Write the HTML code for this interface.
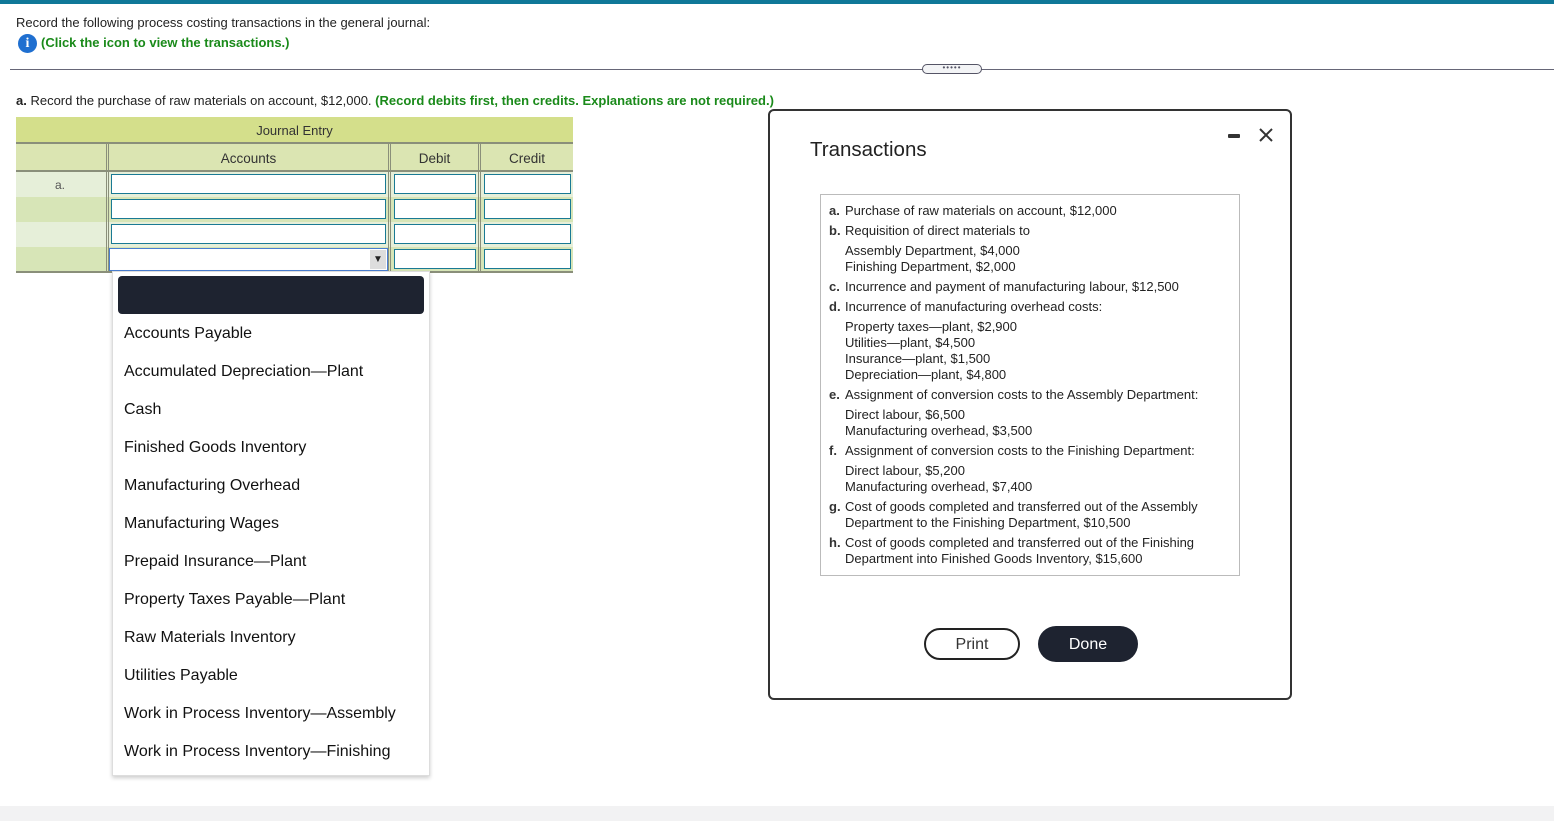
<!DOCTYPE html>
<html><head><meta charset="utf-8"><style>
*{margin:0;padding:0;box-sizing:border-box}
body{width:1554px;height:821px;position:relative;background:#fff;font-family:"Liberation Sans",Arial,sans-serif;color:#222;overflow:hidden}
.a{position:absolute;white-space:nowrap}
.inp{position:absolute;height:20px;border:1px solid #1a7a94;background:#fff}
.t{position:absolute;font-size:13px;line-height:16px;white-space:nowrap;color:#222}
.t b{position:absolute;left:-16px;font-weight:bold;color:#333}
.dd{font-size:16px;color:#111;left:124px}
</style></head><body>
<div class="a" style="left:0;top:0;width:1554px;height:4px;background:#0f7898"></div>
<div class="a" style="left:16px;top:15px;font-size:13px">Record the following process costing transactions in the general journal:</div>
<div class="a" style="left:18px;top:34px;width:19px;height:19px;border-radius:50%;background:#1f6fd0;color:#fff;font-weight:bold;font-size:14px;text-align:center;line-height:19px;font-family:'Liberation Serif',serif">i</div>
<div class="a" style="left:41px;top:35px;font-size:13px;color:#1a8a1a;font-weight:bold">(Click the icon to view the transactions.)</div>
<div class="a" style="left:10px;top:69px;width:1544px;height:1px;background:#667"></div>
<div class="a" style="left:922px;top:64px;width:60px;height:10px;border:1px solid #556;border-radius:5px;background:#f3f4f6;font-size:8px;line-height:5px;text-align:center;color:#556;letter-spacing:1px">•••••</div>
<div class="a" style="left:16px;top:93px;font-size:13px"><b>a.</b> Record the purchase of raw materials on account, $12,000. <span style="color:#1a8a1a;font-weight:bold">(Record debits first, then credits. Explanations are not required.)</span></div>
<div class="a" style="left:16px;top:117px;width:557px;height:26px;background:#d4df8b;font-size:13px;text-align:center;line-height:28px;color:#333">Journal Entry</div>
<div class="a" style="left:16px;top:142px;width:557px;height:2px;background:#8a8f7a"></div>
<div class="a" style="left:16px;top:144px;width:557px;height:26px;background:#dbe5b2"></div>
<div class="a" style="left:16px;top:170px;width:557px;height:2px;background:#8a8f7a"></div>
<div class="a" style="left:16px;top:172px;width:557px;height:25px;background:#e6efd9"></div>
<div class="a" style="left:16px;top:197px;width:557px;height:25px;background:#d7e5b7"></div>
<div class="a" style="left:16px;top:222px;width:557px;height:25px;background:#e6efd9"></div>
<div class="a" style="left:16px;top:247px;width:557px;height:25px;background:#d7e5b7"></div>
<div class="a" style="left:16px;top:271px;width:557px;height:2px;background:#8a8f7a"></div>
<div class="a" style="left:106px;top:143px;width:3px;height:129px;border-left:1px solid #8a8f7a;border-right:1px solid #8a8f7a"></div>
<div class="a" style="left:388px;top:143px;width:3px;height:129px;border-left:1px solid #8a8f7a;border-right:1px solid #8a8f7a"></div>
<div class="a" style="left:478px;top:143px;width:3px;height:129px;border-left:1px solid #8a8f7a;border-right:1px solid #8a8f7a"></div>
<div class="a" style="left:109px;top:151px;width:279px;text-align:center;font-size:13.5px;color:#333">Accounts</div>
<div class="a" style="left:391px;top:151px;width:87px;text-align:center;font-size:13.5px;color:#333">Debit</div>
<div class="a" style="left:481px;top:151px;width:92px;text-align:center;font-size:13.5px;color:#333">Credit</div>
<div class="a" style="left:55px;top:178px;font-size:12px;color:#555">a.</div>
<div class="inp" style="left:111px;top:174px;width:275px"></div>
<div class="inp" style="left:394px;top:174px;width:82px"></div>
<div class="inp" style="left:484px;top:174px;width:87px"></div>
<div class="inp" style="left:111px;top:199px;width:275px"></div>
<div class="inp" style="left:394px;top:199px;width:82px"></div>
<div class="inp" style="left:484px;top:199px;width:87px"></div>
<div class="inp" style="left:111px;top:224px;width:275px"></div>
<div class="inp" style="left:394px;top:224px;width:82px"></div>
<div class="inp" style="left:484px;top:224px;width:87px"></div>
<div class="inp" style="left:109px;top:248px;width:279px;height:23px;border:1px solid #4a7ed0"></div>
<div class="a" style="left:370px;top:250px;width:16px;height:19px;background:#ddd;font-size:10px;text-align:center;line-height:19px">▼</div>
<div class="inp" style="left:394px;top:249px;width:82px"></div>
<div class="inp" style="left:484px;top:249px;width:87px"></div>
<div class="a" style="left:112px;top:271px;width:318px;height:505px;background:#fff;border:1px solid #ddd;box-shadow:0 2px 4px rgba(0,0,0,.2)"></div>
<div class="a" style="left:118px;top:276px;width:306px;height:38px;background:#1e2330;border-radius:4px"></div>
<div class="a dd" style="top:325px">Accounts Payable</div>
<div class="a dd" style="top:363px">Accumulated Depreciation—Plant</div>
<div class="a dd" style="top:401px">Cash</div>
<div class="a dd" style="top:439px">Finished Goods Inventory</div>
<div class="a dd" style="top:477px">Manufacturing Overhead</div>
<div class="a dd" style="top:515px">Manufacturing Wages</div>
<div class="a dd" style="top:553px">Prepaid Insurance—Plant</div>
<div class="a dd" style="top:591px">Property Taxes Payable—Plant</div>
<div class="a dd" style="top:629px">Raw Materials Inventory</div>
<div class="a dd" style="top:667px">Utilities Payable</div>
<div class="a dd" style="top:705px">Work in Process Inventory—Assembly</div>
<div class="a dd" style="top:743px">Work in Process Inventory—Finishing</div>
<div class="a" style="left:768px;top:109px;width:524px;height:591px;border:2px solid #333;border-radius:6px;background:#fff"></div>
<div class="a" style="left:810px;top:138px;font-size:20.5px;color:#222">Transactions</div>
<div class="a" style="left:1228px;top:134px;width:12px;height:4px;background:#333;border-radius:1px"></div>
<svg class="a" style="left:1258px;top:127px" width="16" height="16" viewBox="0 0 16 16"><path d="M2 2L14 14M14 2L2 14" stroke="#333" stroke-width="2"/></svg>
<div class="a" style="left:820px;top:194px;width:420px;height:382px;border:1px solid #bbb"></div>
<div class="t" style="left:845px;top:203px"><b>a.</b>Purchase of raw materials on account, $12,000</div>
<div class="t" style="left:845px;top:223px"><b>b.</b>Requisition of direct materials to</div>
<div class="t" style="left:845px;top:243px">Assembly Department, $4,000</div>
<div class="t" style="left:845px;top:259px">Finishing Department, $2,000</div>
<div class="t" style="left:845px;top:279px"><b>c.</b>Incurrence and payment of manufacturing labour, $12,500</div>
<div class="t" style="left:845px;top:299px"><b>d.</b>Incurrence of manufacturing overhead costs:</div>
<div class="t" style="left:845px;top:319px">Property taxes—plant, $2,900</div>
<div class="t" style="left:845px;top:335px">Utilities—plant, $4,500</div>
<div class="t" style="left:845px;top:351px">Insurance—plant, $1,500</div>
<div class="t" style="left:845px;top:367px">Depreciation—plant, $4,800</div>
<div class="t" style="left:845px;top:387px"><b>e.</b>Assignment of conversion costs to the Assembly Department:</div>
<div class="t" style="left:845px;top:407px">Direct labour, $6,500</div>
<div class="t" style="left:845px;top:423px">Manufacturing overhead, $3,500</div>
<div class="t" style="left:845px;top:443px"><b>f.</b>Assignment of conversion costs to the Finishing Department:</div>
<div class="t" style="left:845px;top:463px">Direct labour, $5,200</div>
<div class="t" style="left:845px;top:479px">Manufacturing overhead, $7,400</div>
<div class="t" style="left:845px;top:499px"><b>g.</b>Cost of goods completed and transferred out of the Assembly</div>
<div class="t" style="left:845px;top:515px">Department to the Finishing Department, $10,500</div>
<div class="t" style="left:845px;top:535px"><b>h.</b>Cost of goods completed and transferred out of the Finishing</div>
<div class="t" style="left:845px;top:551px">Department into Finished Goods Inventory, $15,600</div>
<div class="a" style="left:924px;top:628px;width:96px;height:32px;border:2px solid #222;border-radius:16px;text-align:center;line-height:29px;font-size:16px;color:#333">Print</div>
<div class="a" style="left:1038px;top:626px;width:100px;height:36px;background:#1e2330;border-radius:18px;text-align:center;line-height:37px;font-size:16px;color:#fff">Done</div>
<div class="a" style="left:0;top:806px;width:1554px;height:15px;background:#f2f2f3"></div>
</body></html>
